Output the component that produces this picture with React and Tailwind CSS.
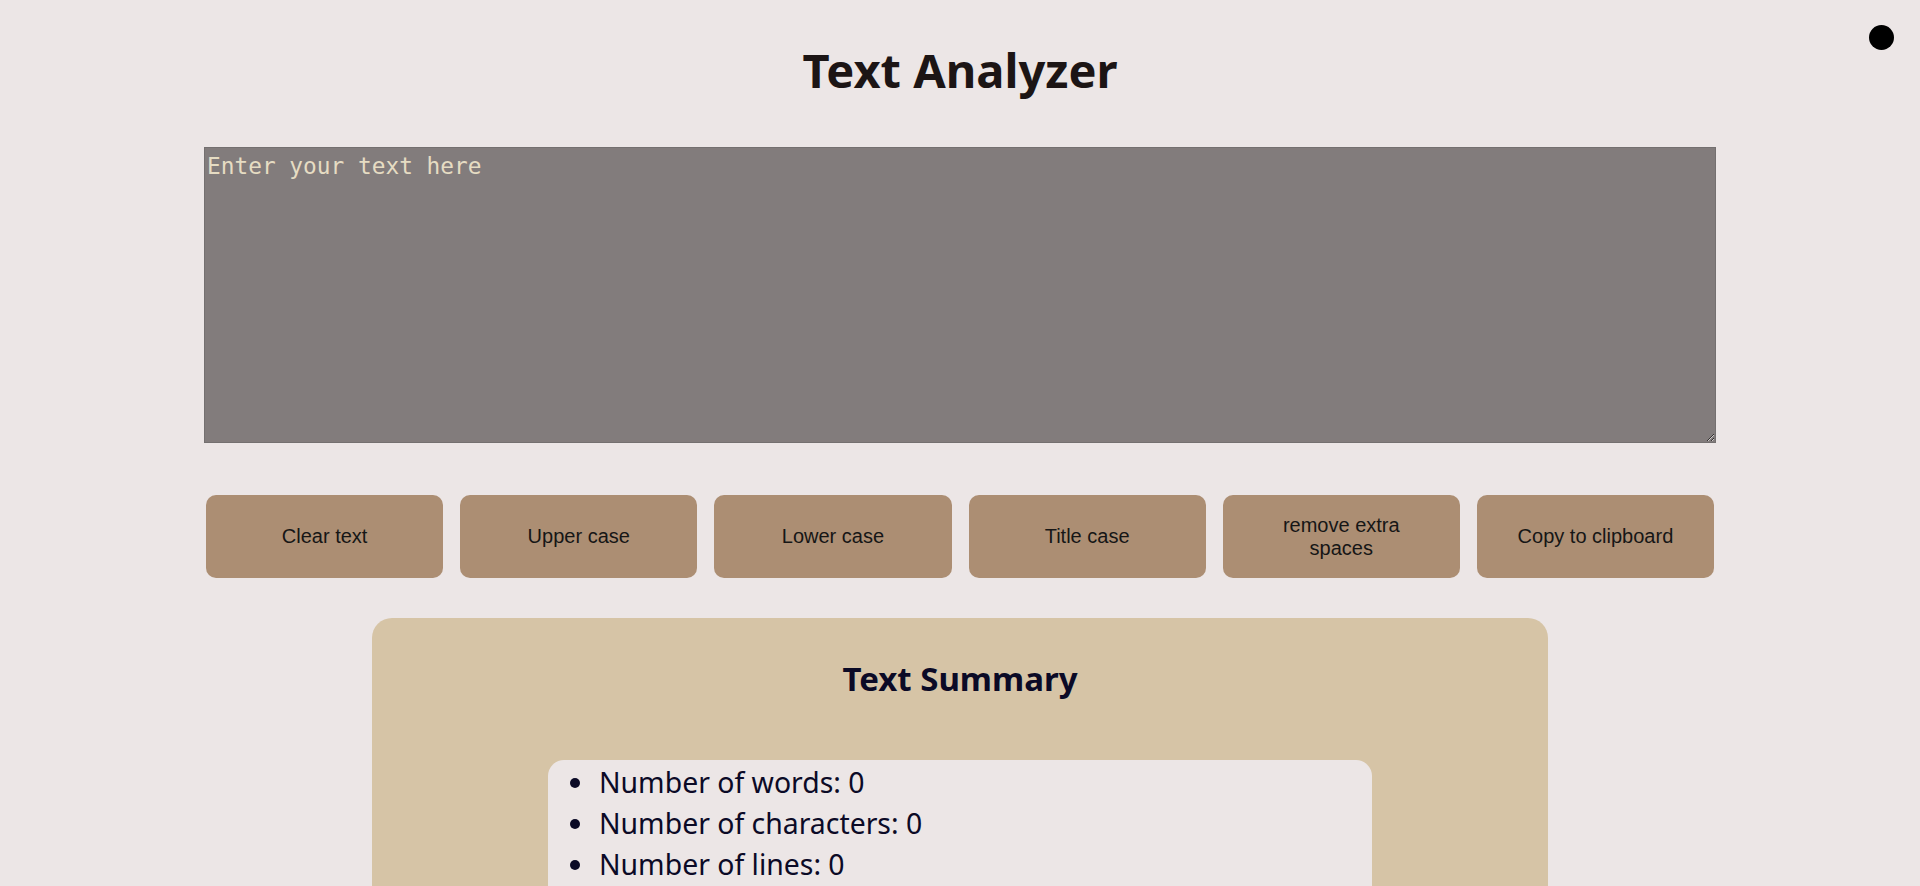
import React from "react";

export default function App() {
  const buttons = [
    "Clear text",
    "Upper case",
    "Lower case",
    "Title case",
    "remove extra spaces",
    "Copy to clipboard",
  ];
  const stats = [
    "Number of words: 0",
    "Number of characters: 0",
    "Number of lines: 0",
  ];
  return (
    <div className="relative min-h-screen w-full bg-[#ece6e6] overflow-hidden">
      <div className="absolute right-[26px] top-[25px] w-[25px] h-[25px] rounded-full bg-black" />
      <div className="flex flex-col items-center">
        <h1 className="mt-[38px] text-[47px] leading-[64px] font-bold text-[#1c1515] font-['Noto_Sans',sans-serif]">
          Text Analyzer
        </h1>
        <textarea
          className="mt-[45px] block w-[1512px] h-[296px] bg-[#827c7c] border border-[#747070] pt-[5px] px-[2px] text-[22.8px] leading-[26px] text-[#e6dcc3] placeholder:text-[#e6dcc3] font-['DejaVu_Sans_Mono',monospace] outline-none"
          placeholder="Enter your text here"
        />
        <div className="mt-[52px] w-[1512px] px-[2px] flex gap-[17px]">
          {buttons.map((b) => (
            <button
              key={b}
              className="flex-1 h-[83px] rounded-[10px] bg-[#ac8e73] px-[36px] text-[20px] leading-[23px] text-[#161616] font-['Liberation_Sans',Arial,sans-serif]"
            >
              {b}
            </button>
          ))}
        </div>
        <div className="mt-[40px] w-[1176px] rounded-[20px] bg-[#d6c4a6] pt-[38px] pb-[40px]">
          <h2 className="text-center text-[33px] leading-[45px] font-bold text-[#0b0a26] font-['Noto_Sans',sans-serif]">
            Text Summary
          </h2>
          <div className="mt-[59px] mx-auto w-[824px] rounded-[16px] bg-[#ece6e6] pt-[2px] pb-[20px]">
            {stats.map((s) => (
              <div
                key={s}
                className="flex items-center h-[41px] text-[28.4px] text-[#0b0a26] font-['Noto_Sans',sans-serif]"
              >
                <span className="ml-[22px] w-[10px] h-[10px] rounded-full bg-[#0b0a26]" />
                <span className="ml-[19px]">{s}</span>
              </div>
            ))}
          </div>
        </div>
      </div>
    </div>
  );
}
